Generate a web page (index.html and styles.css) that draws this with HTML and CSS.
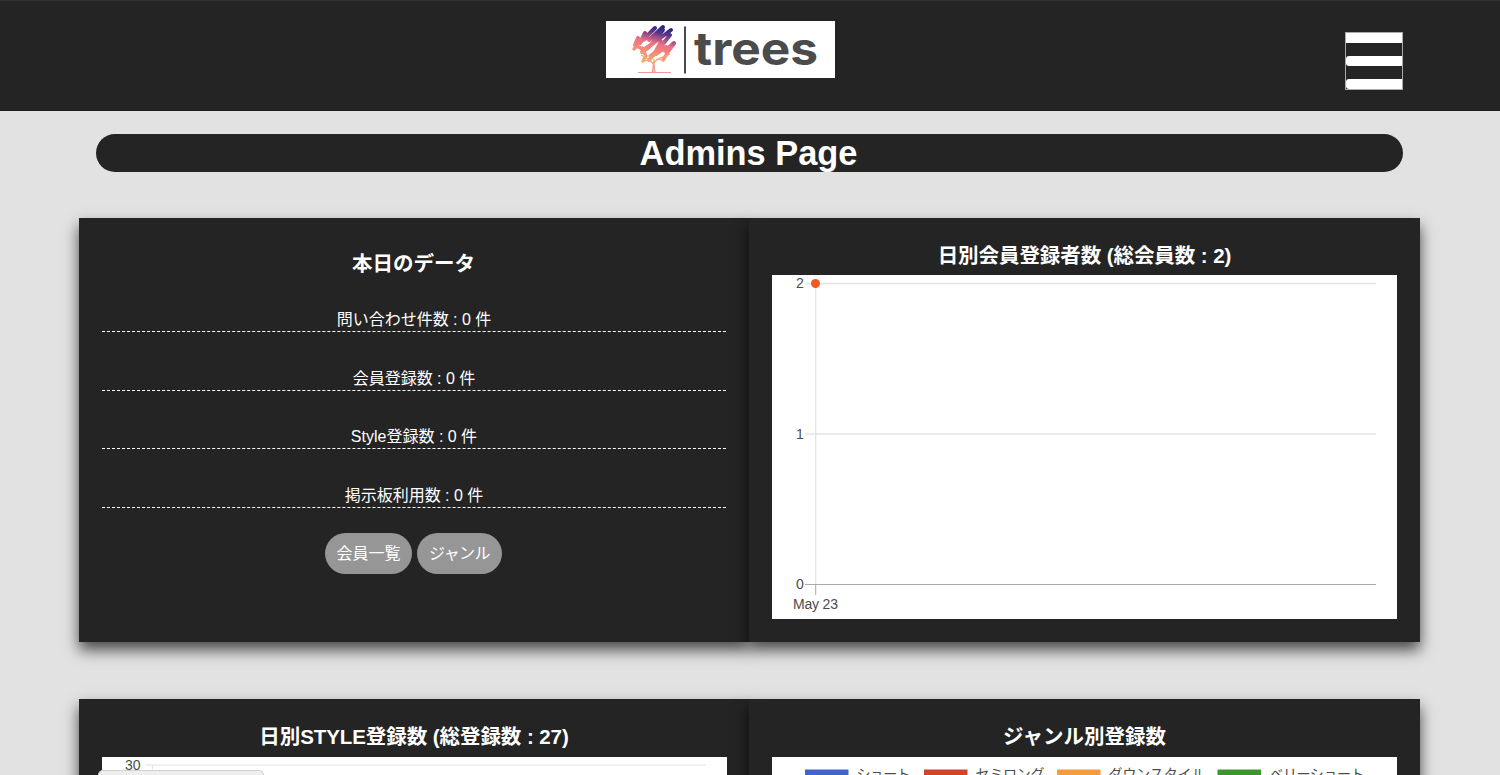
FILE: index.html
```
<!DOCTYPE html>
<html lang="ja">
<head>
<meta charset="utf-8">
<title>Admins Page</title>
<link rel="stylesheet" href="styles.css">
</head>
<body>
<header class="header">
  <svg class="logo" viewBox="0 0 229 57" width="229" height="57" role="img" aria-label="trees">
    <defs>
      <linearGradient id="leaf" gradientUnits="userSpaceOnUse" x1="54" y1="4" x2="44" y2="42">
        <stop offset="0" stop-color="#22208a"/><stop offset=".2" stop-color="#5a3488"/><stop offset=".48" stop-color="#ee7185"/><stop offset="1" stop-color="#f8ad67"/>
      </linearGradient>
    </defs>
    <rect width="229" height="57" fill="#fff"/>
    <g fill="none" stroke="url(#leaf)" stroke-linecap="round" stroke-linejoin="round">
      <path stroke-width="4" d="M49 7 38 18M57 6 43 19M65 9 45 24 37 29M32 17 29 24M39 12 34 22M57 9 43 26 36 31M68 22 59 30M64 14 53 28 43 39M60 26 50 33"/>
      <path stroke-width="3.4" d="M28 28 34 21 41 17M29 24 38 29M55 20 49 31 44 35M68 23 62 31 57 39M36 27 40 35 37 40"/>
    </g>
    <path d="M48 51V38M48 44C45 38 41 38 35 34M48 42C51 36 55 38 64 33M44 39 38 40M52 38 58 40" fill="none" stroke="#f6a477" stroke-width="1.2"/>
    <path d="M46.500 51 47.500 41 49 51M32 51.500H65" fill="none" stroke="#f39b90" stroke-width="1.100"/>
    <path d="M79 5.500V52.500" stroke="#4a4a4a" stroke-width="2"/>
    <text class="logo-text" x="88" y="44" textLength="124" lengthAdjust="spacingAndGlyphs">trees</text>
  </svg>
  <button class="menu" aria-label="menu"><span></span><span></span><span></span></button>
</header>
<main>
  <h1 class="title">Admins Page</h1>
  <section class="row">
    <div class="panel panel-today">
      <h2>本日のデータ</h2>
      <p class="stat">問い合わせ件数 : 0 件</p>
      <p class="stat">会員登録数 : 0 件</p>
      <p class="stat">Style登録数 : 0 件</p>
      <p class="stat">掲示板利用数 : 0 件</p>
      <div class="buttons"><a class="btn">会員一覧</a><a class="btn btn-genre">ジャンル</a></div>
    </div>
    <div class="panel">
      <h2 class="tight">日別会員登録者数 (総会員数 : 2)</h2>
      <svg class="chart" viewBox="0 0 625 344">
        <path d="M33 8.500H604M33 159H604" stroke="#e3e3e3" stroke-width="1.300"/>
        <path d="M43.700 8V309" stroke="#e3e3e3" stroke-width="1.300"/>
        <path d="M33 309.500H604" stroke="#aaa" stroke-width="1.200"/>
        <path d="M43.700 309V320" stroke="#aaa"/>
        <circle cx="43.500" cy="8.500" r="4.500" fill="#f05a22"/>
        <g class="axis"><text x="24" y="13">2</text><text x="24" y="164">1</text><text x="24" y="314">0</text><text x="21" y="334" textLength="45">May 23</text></g>
      </svg>
    </div>
  </section>
  <section class="row row-clipped">
    <div class="panel">
      <h2 class="tight">日別STYLE登録数 (総登録数 : 27)</h2>
      <svg class="chart" viewBox="0 0 625 344">
        <path d="M43 8H604M50.500 8V309" fill="none" stroke="#e3e3e3"/>
        <text class="axis" x="23" y="13">30</text>
      </svg>
    </div>
    <div class="panel">
      <h2>ジャンル別登録数</h2>
      <svg class="chart" viewBox="0 0 625 344">
        <path fill="#3f66cc" d="M33 12.500h43.500v13H33z"/><path fill="#d2432a" d="M152 12.500h43.500v13H152z"/><path fill="#f59c38" d="M285 12.500h43.500v13H285z"/><path fill="#3c962d" d="M445.500 12.500H489v13h-43.500z"/>
        <g class="axis"><text x="84.500" y="22" textLength="54">ショート</text><text x="203.500" y="22" textLength="69">セミロング</text><text x="336.500" y="22" textLength="97">ダウンスタイル</text><text x="497.500" y="22" textLength="95">ベリーショート</text></g>
      </svg>
    </div>
  </section>
</main>
<div class="status"></div>
</body>
</html>
```
FILE: styles.css
```
* { box-sizing: border-box; }
html, body { height: 100%; overflow: hidden; }
body {
  margin: 0;
  background: #e2e2e2;
  color: #fff;
  font: 16px/24px "Liberation Sans", "Noto Sans CJK JP", sans-serif;
}
.header {
  height: 111px;
  padding: 20px 97px 0 606px;
  display: flex;
  justify-content: space-between;
  align-items: flex-start;
  background: #242424;
  border-top: 1px solid #333;
  border-bottom: 1px solid #1c1c1c;
}
.logo { display: block; }
.logo-text { font: 700 46px Inter, sans-serif; fill: #4b4b4b; }
.menu {
  width: 58px;
  height: 58px;
  margin: 11px 0 0;
  padding: 0;
  border: 1px solid #aaa;
  background: #242424;
  display: flex;
  flex-direction: column;
  justify-content: space-between;
}
.menu span { display: block; width: 100%; height: 10px; border-radius: 3px 0 0 3px; background: #fff; }
.menu span:first-child { border-radius: 0; }
.title {
  width: 1307px;
  height: 38px;
  margin: 23px 0 46px 96px;
  border-radius: 19px;
  background: #242424;
  text-align: center;
  font-size: 34.400px;
  line-height: 38px;
  padding-right: 2px;
}
.row {
  display: grid;
  grid-template-columns: 670px 671px;
  height: 424px;
  margin: 0 0 57.400px 79px;
}
.row-clipped { height: 76px; margin-bottom: 0; }
.panel {
  background: #242424;
  box-shadow: 0 8px 14px rgba(0, 0, 0, .68);
  padding: 23px 23px 0;
  text-align: center;
}
.panel h2 {
  margin: 0 0 4px;
  font-size: 20.500px;
  line-height: 30px;
  font-weight: 700;
}
.row-clipped h2 { margin-bottom: 4.600px; }
.panel h2.tight { letter-spacing: -.07px; }
.panel-today { padding: 31px 23px 0 22px; }
.panel-today h2 { margin-bottom: 28px; }
.stat {
  height: 25px;
  margin: 0 0 33.500px 1px;
  padding-top: 1px;
  border-bottom: 1px dashed #fff;
}
.buttons { display: flex; justify-content: center; gap: 5px; margin-top: -8.500px; }
.btn { width: 87px; height: 41px; border-radius: 21px; background: #969696; line-height: 41px; }
.btn-genre { width: 85px; letter-spacing: -.6px; }
.chart { display: block; width: 625px; height: 344px; background: #fff; }
.axis { font: 14px "Liberation Sans", "Noto Sans CJK JP", sans-serif; fill: #4c4c4c; }
.status {
  position: fixed;
  left: 98px;
  bottom: 0;
  width: 166px;
  height: 5px;
  border: 1px solid #d2d2d2;
  border-bottom: 0;
  border-radius: 5px 5px 0 0;
  background: #eee;
}
```
